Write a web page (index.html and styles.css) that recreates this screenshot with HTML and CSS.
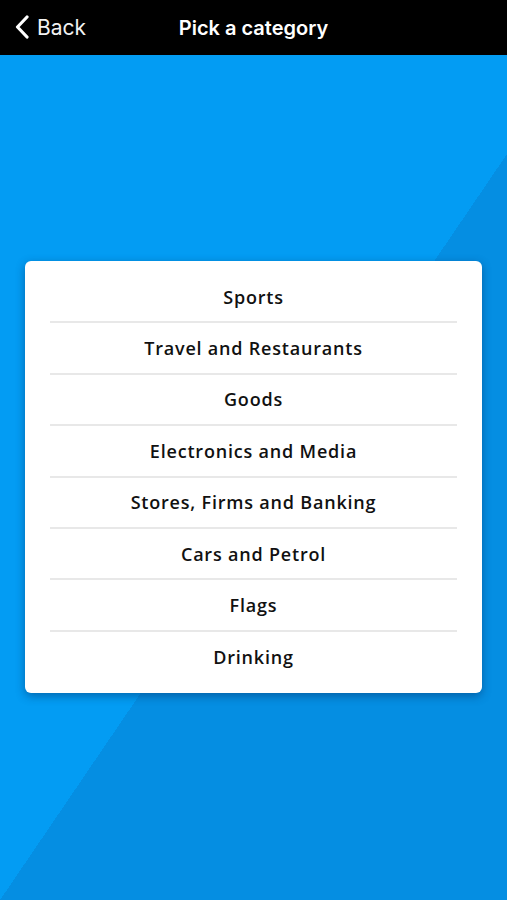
FILE: index.html
```html
<!DOCTYPE html>
<html lang="en">
<head>
<meta charset="utf-8">
<title>Pick a category</title>
<link rel="stylesheet" href="styles.css">
</head>
<body>
<div class="screen">
  <header class="navbar">
    <a class="back" href="#">
      <svg class="chev" width="18" height="24" viewBox="0 0 18 24"><path d="M13 2 L3.5 12 L13 22" fill="none" stroke="#fff" stroke-width="3.2" stroke-linecap="round" stroke-linejoin="round"/></svg>
      <span>Back</span>
    </a>
    <h1 class="title">Pick a category</h1>
  </header>
  <main class="content">
    <ul class="card">
      <li class="item">Sports</li>
      <li class="item">Travel and Restaurants</li>
      <li class="item">Goods</li>
      <li class="item">Electronics and Media</li>
      <li class="item">Stores, Firms and Banking</li>
      <li class="item">Cars and Petrol</li>
      <li class="item">Flags</li>
      <li class="item">Drinking</li>
    </ul>
  </main>
</div>
</body>
</html>
```
FILE: styles.css
```css
* { box-sizing: border-box; }
html, body { margin: 0; padding: 0; }
body { font-family: "Open Sans", "Liberation Sans", sans-serif; background: #000; }
.screen { width: 507px; height: 900px; display: flex; flex-direction: column; }
.navbar {
  height: 55px; background: #000; color: #fff;
  display: flex; align-items: center; justify-content: center;
  position: relative; flex: none;
}
.back {
  position: absolute; left: 14px; top: 0; height: 55px;
  display: flex; align-items: center; gap: 5px;
  color: #f2f2f2; text-decoration: none;
  font-family: Inter, "Liberation Sans", sans-serif; font-size: 21px; font-weight: 400;
}
.chev { display: block; margin-top: -1px; }
.title {
  margin: 0; font-family: Inter, "Liberation Sans", sans-serif;
  font-size: 20px; font-weight: 600; color: #fff; letter-spacing: 0;
}
.content {
  flex: 1;
  background: linear-gradient(124.2deg, #039cf3 475px, #058ee2 475px);
  display: flex; flex-direction: column; align-items: center;
  padding-top: 206px;
}
.card {
  list-style: none; margin: 0; padding: 11px 25px 10px;
  width: 457px; background: #fff; border-radius: 6px;
  box-shadow: 0 3px 10px rgba(0, 40, 90, 0.45);
}
.item {
  height: 51.4px; display: flex; align-items: center; justify-content: center;
  font-size: 18px; font-weight: 600; color: #111; letter-spacing: 0.8px;
  border-bottom: 2px solid #e8e8e8;
}
.item:last-child { border-bottom: none; }
```
